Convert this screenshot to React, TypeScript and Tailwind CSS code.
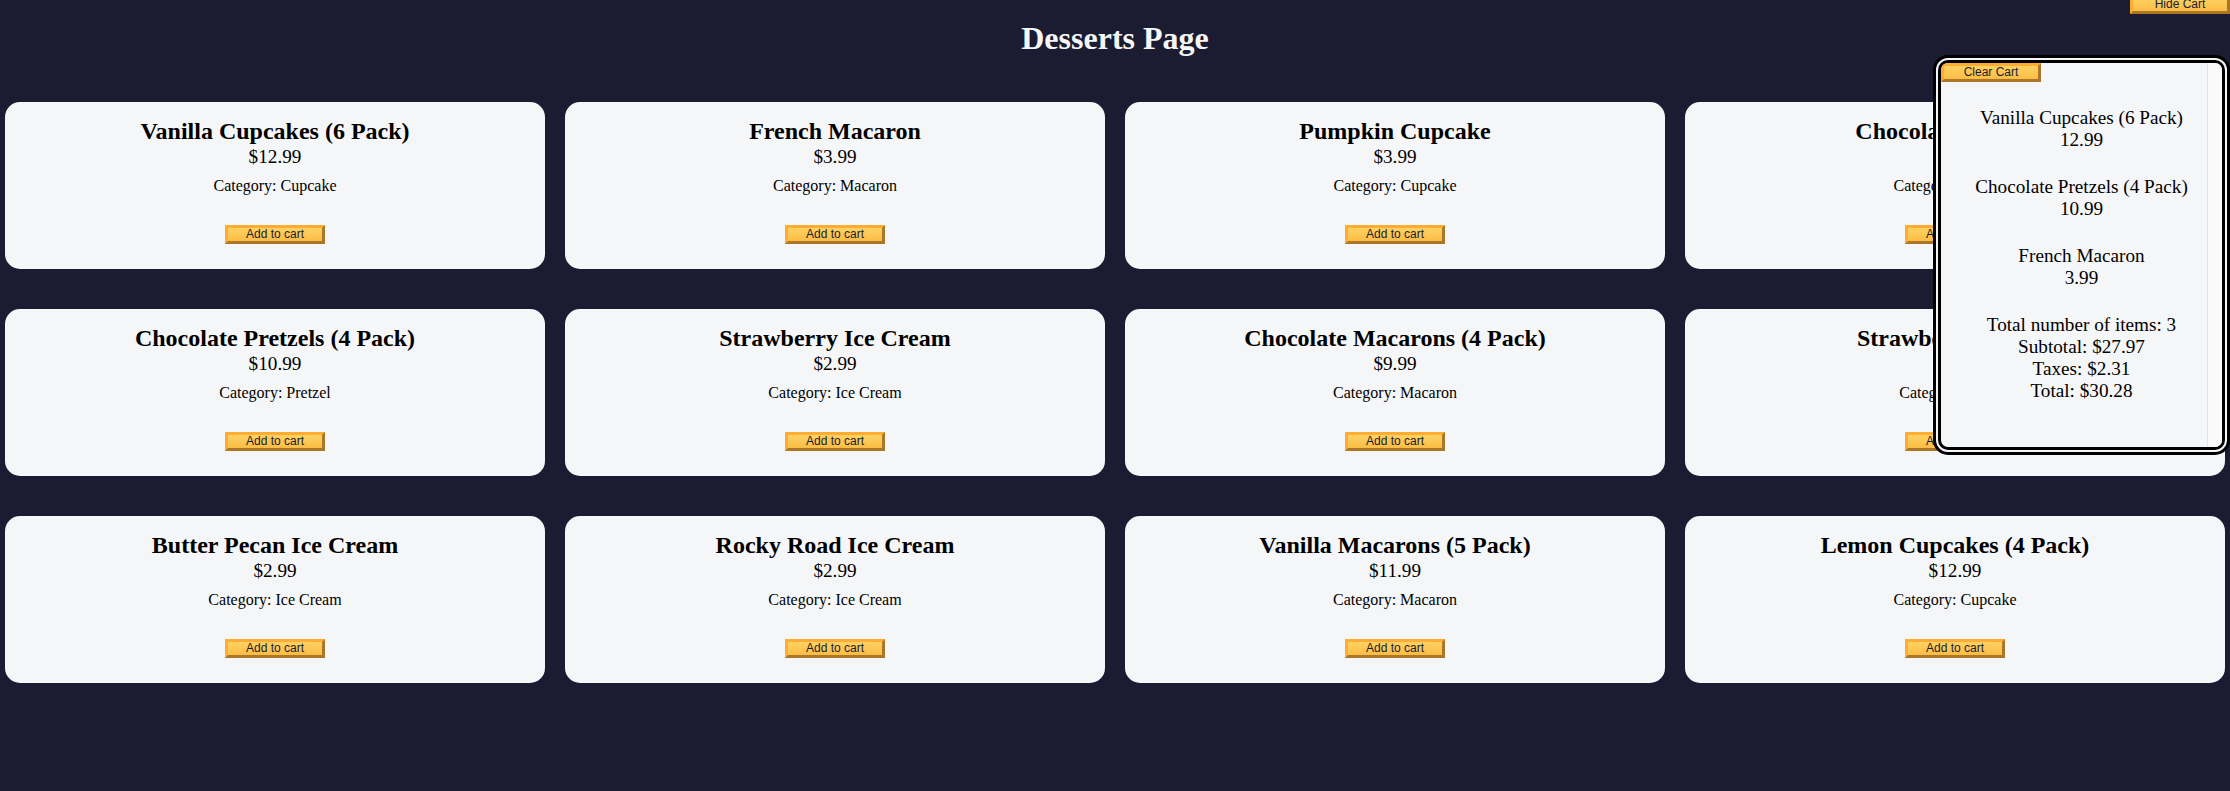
import React from "react";

type Dessert = { name: string; price: string; category: string };

const desserts: Dessert[] = [
  { name: "Vanilla Cupcakes (6 Pack)", price: "12.99", category: "Cupcake" },
  { name: "French Macaron", price: "3.99", category: "Macaron" },
  { name: "Pumpkin Cupcake", price: "3.99", category: "Cupcake" },
  { name: "Chocolate Cupcake", price: "5.99", category: "Cupcake" },
  { name: "Chocolate Pretzels (4 Pack)", price: "10.99", category: "Pretzel" },
  { name: "Strawberry Ice Cream", price: "2.99", category: "Ice Cream" },
  { name: "Chocolate Macarons (4 Pack)", price: "9.99", category: "Macaron" },
  { name: "Strawberry Pretzel", price: "4.99", category: "Pretzel" },
  { name: "Butter Pecan Ice Cream", price: "2.99", category: "Ice Cream" },
  { name: "Rocky Road Ice Cream", price: "2.99", category: "Ice Cream" },
  { name: "Vanilla Macarons (5 Pack)", price: "11.99", category: "Macaron" },
  { name: "Lemon Cupcakes (4 Pack)", price: "12.99", category: "Cupcake" },
];

const cart = [
  { name: "Vanilla Cupcakes (6 Pack)", price: "12.99" },
  { name: "Chocolate Pretzels (4 Pack)", price: "10.99" },
  { name: "French Macaron", price: "3.99" },
];

const btn =
  "w-[100px] h-[19px] border-[3px] border-t-[#feac32] border-l-[#feac32] border-r-[#ad7626] border-b-[#ad7626] bg-[linear-gradient(#fed262,#fbbd46)] text-[#1b1b32] text-[12px] leading-[13px] font-['Liberation_Sans',Arial,sans-serif] p-0 flex items-center justify-center";

function Card({ d }: { d: Dessert }) {
  return (
    <div className="bg-[#f5f6f7] rounded-[15px] pt-[15px] pb-[25px] px-[15px] flex flex-col items-center text-center text-black">
      <h2 className="text-[24px] leading-[29px] font-bold">{d.name}</h2>
      <p className="text-[19.2px] leading-[22px]">${d.price}</p>
      <p className="text-[16px] leading-[18px] mt-[9px]">Category: {d.category}</p>
      <button className={btn + " mt-[30px]"}>Add to cart</button>
    </div>
  );
}

export default function App() {
  return (
    <div className="relative min-h-screen w-full bg-[#1b1b32] font-['Liberation_Serif','Times_New_Roman',serif] overflow-hidden">
      <h1 className="pt-[20px] text-center text-[32px] leading-[37px] font-bold text-[#f5f6f7]">
        Desserts Page
      </h1>
      <div className="mt-[45px] px-[5px] grid grid-cols-4 gap-x-[20px] gap-y-[40px]">
        {desserts.map((d) => (
          <Card key={d.name} d={d} />
        ))}
      </div>

      <button className={btn + " absolute top-[-5px] right-0"}>Hide Cart</button>

      <div className="absolute top-[55px] left-[1933px] w-[297px] h-[400px] border-[8px] border-double border-black rounded-[15px] bg-[#f5f6f7] overflow-hidden text-black">
        <div className="relative text-center text-[19.2px] leading-[22px]">
          <button className={btn}>Clear Cart</button>
          {cart.map((c) => (
            <div key={c.name} className="my-[25px]">
              <p>{c.name}</p>
              <p>{c.price}</p>
            </div>
          ))}
          <p>Total number of items: 3</p>
          <p>Subtotal: $27.97</p>
          <p>Taxes: $2.31</p>
          <p>Total: $30.28</p>
        </div>
        <div className="absolute top-0 bottom-0 right-0 w-[15px] bg-[#fafafa] border-l border-[#e3e3e3]" />
      </div>
    </div>
  );
}
